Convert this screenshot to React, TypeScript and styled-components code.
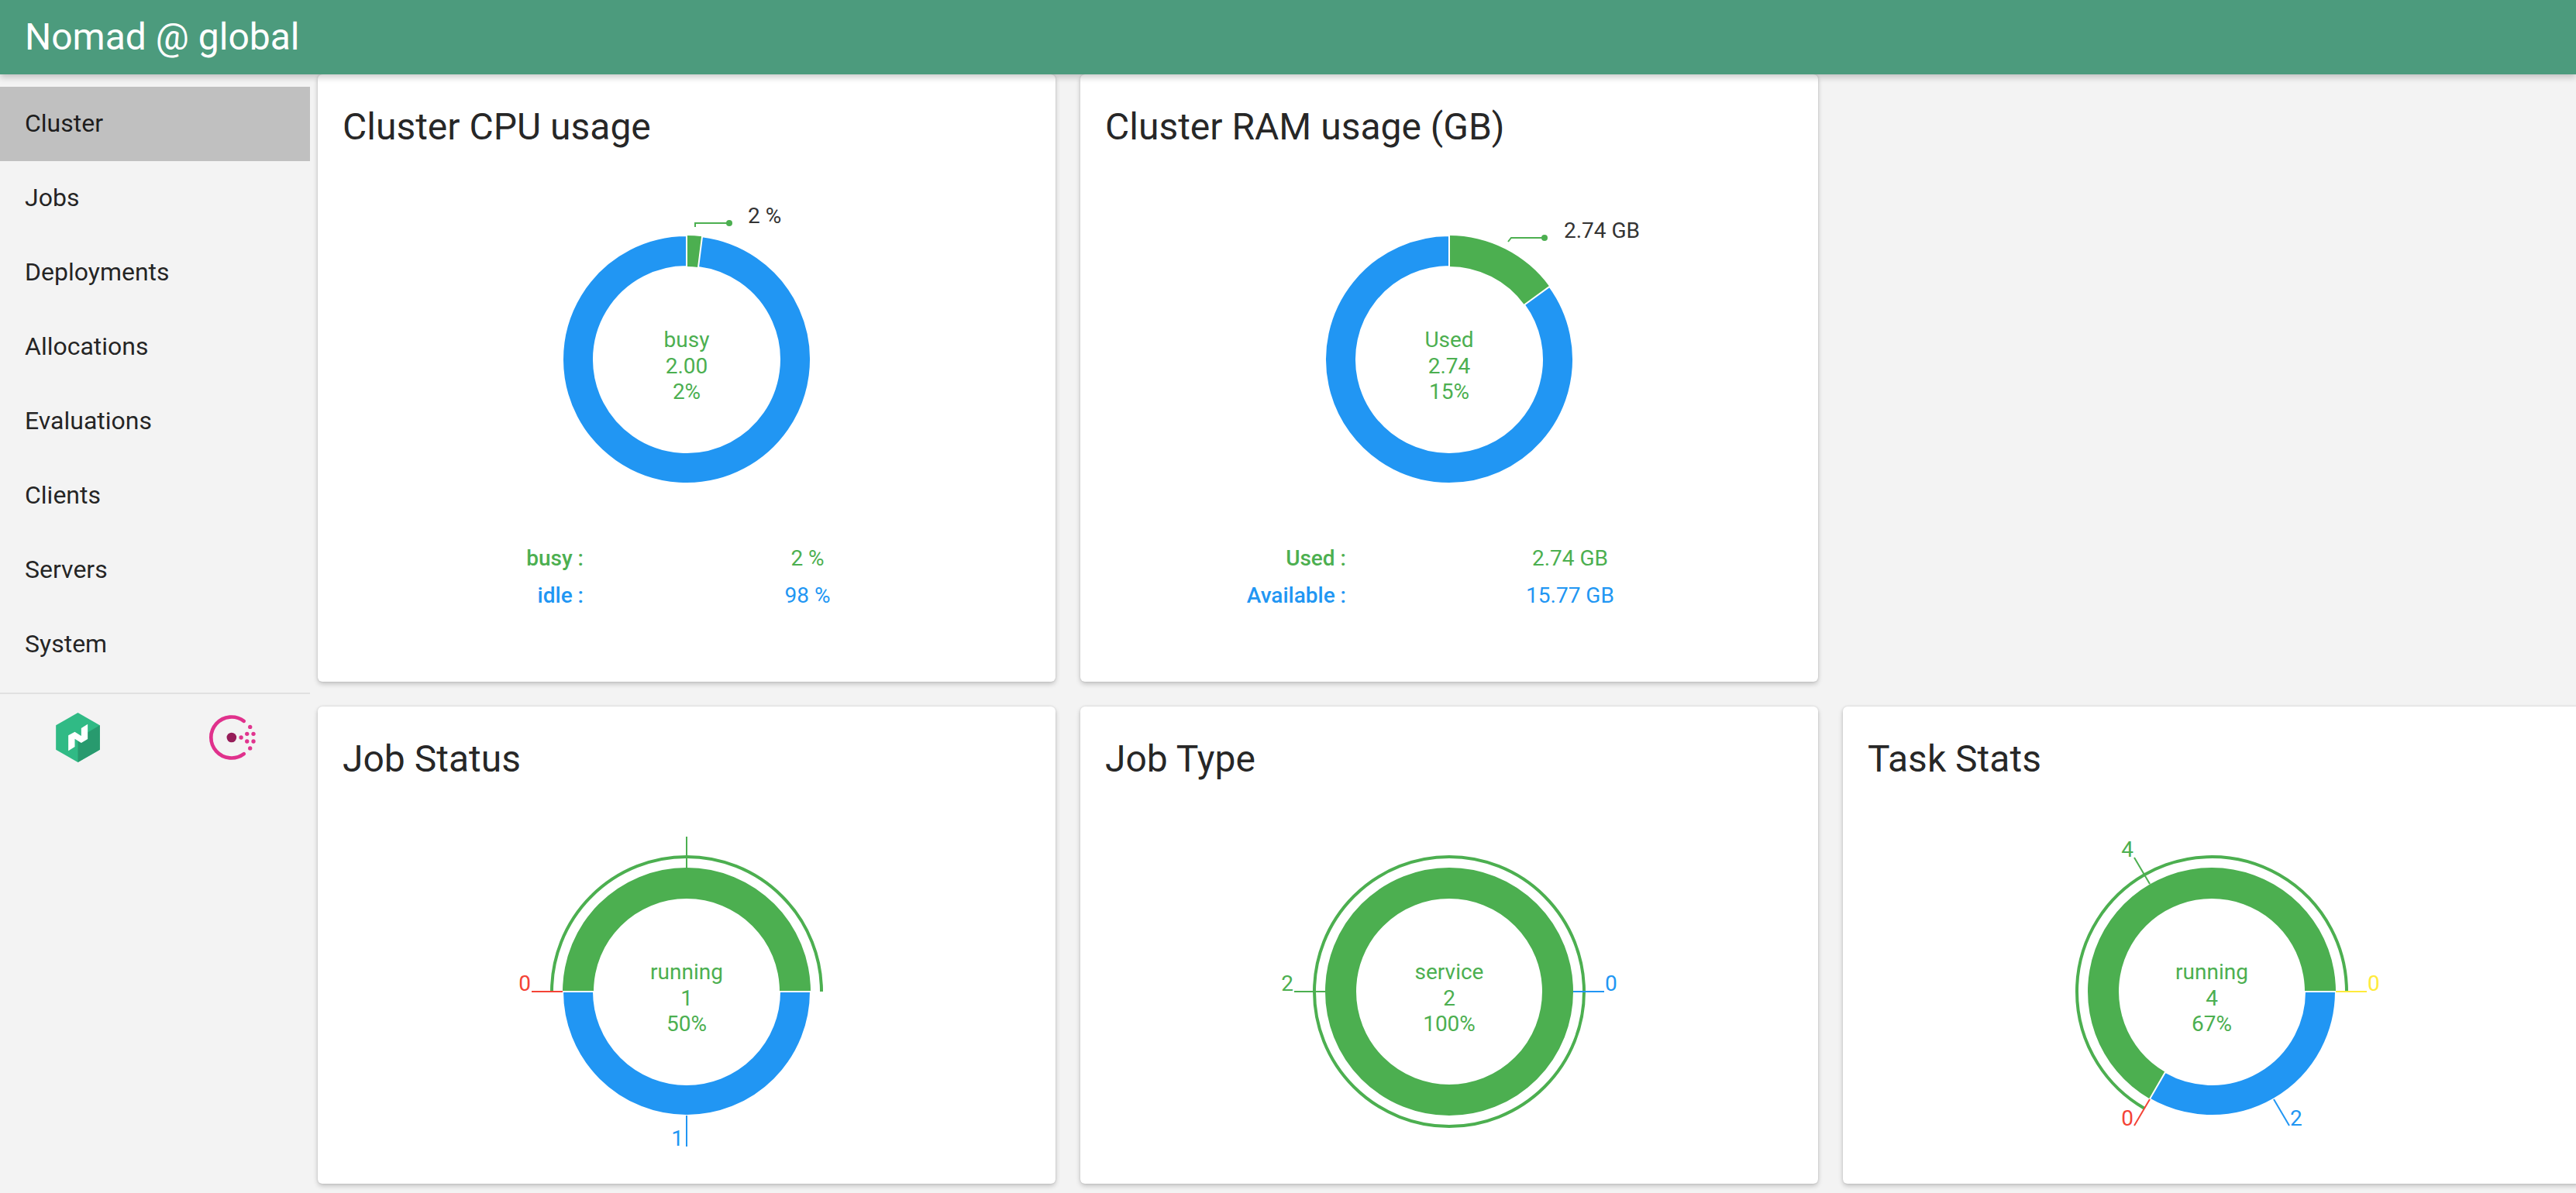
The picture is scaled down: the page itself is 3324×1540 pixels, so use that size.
import React from 'react';
import styled, { createGlobalStyle } from 'styled-components';

const GREEN = '#4caf50';
const BLUE = '#2196f3';
const RED = '#f44336';
const YELLOW = '#ffeb3b';

const INNER = 120;
const OUTER = 160;

type Segment = { from: number; to: number; color: string; outlined?: boolean };
type Leader = { points: string; color: string; dot?: boolean };
type Label = { x: number; y: number; text: string; color: string; anchor?: 'start' | 'end' };

type ChartProps = {
  segments: Segment[];
  center: string[];
  arc?: [number, number];
  leaders: Leader[];
  labels: Label[];
};

const NAV_ITEMS = ['Cluster', 'Jobs', 'Deployments', 'Allocations', 'Evaluations', 'Clients', 'Servers', 'System'];

// angles are in degrees, clockwise from 12 o'clock
function polar(r: number, deg: number) {
  const rad = (deg * Math.PI) / 180;
  return `${(r * Math.sin(rad)).toFixed(2)} ${(-r * Math.cos(rad)).toFixed(2)}`;
}

function arcPath(r: number, from: number, to: number) {
  const large = to - from > 180 ? 1 : 0;
  return `M${polar(r, from)}A${r} ${r} 0 ${large} 1 ${polar(r, to)}`;
}

function slicePath(from: number, to: number) {
  const large = to - from > 180 ? 1 : 0;
  return [
    `M${polar(OUTER, from)}`,
    `A${OUTER} ${OUTER} 0 ${large} 1 ${polar(OUTER, to)}`,
    `L${polar(INNER, to)}`,
    `A${INNER} ${INNER} 0 ${large} 0 ${polar(INNER, from)}`,
    'Z',
  ].join('');
}

function Donut({ segments, center, arc, leaders, labels }: ChartProps) {
  return (
    <ChartSvg viewBox="-476 -240 952 472">
      {segments.map((s, i) =>
        s.to - s.from >= 360 ? (
          <circle key={i} r={(INNER + OUTER) / 2} fill="none" stroke={s.color} strokeWidth={OUTER - INNER} />
        ) : (
          <path
            key={i}
            d={slicePath(s.from, s.to)}
            fill={s.color}
            stroke={s.outlined ? '#fff' : 'none'}
            strokeWidth={2}
          />
        ),
      )}
      {arc &&
        (arc[1] - arc[0] >= 360 ? (
          <circle r={174} fill="none" stroke={GREEN} strokeWidth={4} />
        ) : (
          <path d={arcPath(174, arc[0], arc[1])} fill="none" stroke={GREEN} strokeWidth={4} />
        ))}
      {leaders.map((l, i) => (
        <React.Fragment key={i}>
          <polyline points={l.points} fill="none" stroke={l.color} strokeWidth={2} />
          {l.dot && <circle cx={l.points.split(' ').pop()!.split(',')[0]} cy={l.points.split(' ').pop()!.split(',')[1]} r={4} fill={l.color} />}
        </React.Fragment>
      ))}
      {labels.map((l, i) => (
        <ChartText key={i} x={l.x} y={l.y} fill={l.color} textAnchor={l.anchor ?? 'start'}>
          {l.text}
        </ChartText>
      ))}
      {center.map((line, i) => (
        <ChartText key={i} x={0} y={-16 + i * 33.5} fill={GREEN} textAnchor="middle">
          {line}
        </ChartText>
      ))}
    </ChartSvg>
  );
}

function NomadLogo() {
  return (
    <svg width="57" height="64" viewBox="215 180 170 192">
      <polygon points="300,180 385,229 385,323 300,372 215,323 215,229" fill="#30ba85" />
      <polygon points="385,229 385,323 300,372 300,278" fill="#289a6e" />
      <polygon
        points="263,268 288,254 313,270 313,240 338,224 338,282 313,297 288,281 288,312 263,328"
        fill="#fff"
      />
    </svg>
  );
}

function ConsulLogo() {
  return (
    <svg width="63" height="60" viewBox="806 185 190 180">
      <path d="M944 211A80 80 0 1 0 944 339" fill="none" stroke="#e0318c" strokeWidth="14" strokeLinecap="round" />
      <circle cx="896" cy="275" r="19" fill="#961d59" />
      <g fill="#e0348e">
        <circle cx="933" cy="275" r="8" />
        <circle cx="968" cy="234" r="8" />
        <circle cx="956" cy="261" r="8" />
        <circle cx="981" cy="261" r="8" />
        <circle cx="956" cy="290" r="8" />
        <circle cx="981" cy="290" r="8" />
        <circle cx="968" cy="317" r="8" />
      </g>
    </svg>
  );
}

export default function App() {
  return (
    <>
      <GlobalStyle />
      <Page>
        <Header>Nomad @ global</Header>
        <Body>
          <Sidebar>
            <NavList>
              {NAV_ITEMS.map((item, i) => (
                <NavItem key={item} $active={i === 0}>
                  {item}
                </NavItem>
              ))}
            </NavList>
            <LogoRow>
              <NomadLogo />
              <ConsulLogo />
            </LogoRow>
          </Sidebar>
          <Main>
            <Card $row={1}>
              <CardTitle>Cluster CPU usage</CardTitle>
              <Donut
                segments={[
                  { from: 0, to: 7.2, color: GREEN },
                  { from: 7.2, to: 360, color: BLUE, outlined: true },
                ]}
                center={['busy', '2.00', '2%']}
                leaders={[{ points: '11,-171 11,-176 55,-176', color: GREEN, dot: true }]}
                labels={[{ x: 79, y: -176, text: '2 %', color: '#333' }]}
              />
              <Legend>
                <LegendLabel $color={GREEN}>busy :</LegendLabel>
                <LegendValue $color={GREEN}>2 %</LegendValue>
                <LegendLabel $color={BLUE}>idle :</LegendLabel>
                <LegendValue $color={BLUE}>98 %</LegendValue>
              </Legend>
            </Card>
            <Card $row={1}>
              <CardTitle>Cluster RAM usage (GB)</CardTitle>
              <Donut
                segments={[
                  { from: 0, to: 54, color: GREEN },
                  { from: 54, to: 360, color: BLUE, outlined: true },
                ]}
                center={['Used', '2.74', '15%']}
                leaders={[{ points: '76,-152 80,-157 123,-157', color: GREEN, dot: true }]}
                labels={[{ x: 148, y: -157, text: '2.74 GB', color: '#333' }]}
              />
              <Legend>
                <LegendLabel $color={GREEN}>Used :</LegendLabel>
                <LegendValue $color={GREEN}>2.74 GB</LegendValue>
                <LegendLabel $color={BLUE}>Available :</LegendLabel>
                <LegendValue $color={BLUE}>15.77 GB</LegendValue>
              </Legend>
            </Card>
            <Spacer />
            <Card $row={2}>
              <CardTitle>Job Status</CardTitle>
              <Donut
                segments={[
                  { from: 270, to: 450, color: GREEN },
                  { from: 90, to: 270, color: BLUE, outlined: true },
                ]}
                arc={[270, 450]}
                center={['running', '1', '50%']}
                leaders={[
                  { points: '0,-200 0,-160', color: GREEN },
                  { points: '-200,0 -160,0', color: RED },
                  { points: '0,160 0,200', color: BLUE },
                ]}
                labels={[
                  { x: -201, y: -1, text: '0', color: RED, anchor: 'end' },
                  { x: -4, y: 199, text: '1', color: BLUE, anchor: 'end' },
                ]}
              />
            </Card>
            <Card $row={2}>
              <CardTitle>Job Type</CardTitle>
              <Donut
                segments={[{ from: 0, to: 360, color: GREEN }]}
                arc={[0, 360]}
                center={['service', '2', '100%']}
                leaders={[
                  { points: '-200,0 -160,0', color: GREEN },
                  { points: '160,0 200,0', color: BLUE },
                ]}
                labels={[
                  { x: -201, y: -1, text: '2', color: GREEN, anchor: 'end' },
                  { x: 201, y: -1, text: '0', color: BLUE },
                ]}
              />
            </Card>
            <Card $row={2}>
              <CardTitle>Task Stats</CardTitle>
              <Donut
                segments={[
                  { from: 210, to: 450, color: GREEN },
                  { from: 90, to: 210, color: BLUE, outlined: true },
                ]}
                arc={[210, 450]}
                center={['running', '4', '67%']}
                leaders={[
                  { points: '-80,-139 -100,-173', color: GREEN },
                  { points: '-80,139 -100,173', color: RED },
                  { points: '80,139 100,173', color: BLUE },
                  { points: '160,0 200,0', color: YELLOW },
                ]}
                labels={[
                  { x: -101, y: -174, text: '4', color: GREEN, anchor: 'end' },
                  { x: -101, y: 173, text: '0', color: RED, anchor: 'end' },
                  { x: 101, y: 173, text: '2', color: BLUE },
                  { x: 201, y: -1, text: '0', color: YELLOW },
                ]}
              />
            </Card>
          </Main>
        </Body>
      </Page>
    </>
  );
}

const GlobalStyle = createGlobalStyle`
  html, body {
    margin: 0;
    padding: 0;
    background: #f3f3f3;
    overflow: hidden;
  }
  * {
    box-sizing: border-box;
  }
`;

const Page = styled.div`
  width: 3324px;
  height: 1540px;
  overflow: hidden;
  font-family: Roboto, 'Liberation Sans', sans-serif;
  color: rgba(0, 0, 0, 0.87);
  background: #f3f3f3;
`;

const Header = styled.header`
  position: relative;
  z-index: 2;
  height: 96px;
  padding: 0 32px 2px;
  display: flex;
  align-items: center;
  background: #4c9b7d;
  color: #fff;
  font-size: 48px;
  box-shadow: 0 4px 8px rgba(0, 0, 0, 0.2);
`;

const Body = styled.div`
  display: flex;
`;

const Sidebar = styled.nav`
  flex: 0 0 400px;
  padding-top: 16px;
`;

const NavList = styled.div`
  padding-bottom: 14px;
  border-bottom: 2px solid #e0e0e0;
`;

const NavItem = styled.div<{ $active?: boolean }>`
  height: 96px;
  padding: 0 32px 2px;
  display: flex;
  align-items: center;
  font-size: 32px;
  background: ${p => (p.$active ? '#c0c0c0' : 'transparent')};
`;

const LogoRow = styled.div`
  display: grid;
  grid-template-columns: 200px 200px;
  justify-items: center;
  align-items: center;
  padding-top: 24px;
`;

const Main = styled.main`
  flex: none;
  margin-left: 10px;
  display: grid;
  grid-template-columns: repeat(3, 952px);
  column-gap: 32px;
  row-gap: 32px;
  align-content: start;
`;

const Spacer = styled.div``;

const Card = styled.section<{ $row: 1 | 2 }>`
  height: ${p => (p.$row === 1 ? 784 : 616)}px;
  background: #fff;
  border-radius: 6px;
  box-shadow: 0 3px 6px rgba(0, 0, 0, 0.2), 0 0 3px rgba(0, 0, 0, 0.12);
`;

const CardTitle = styled.h2`
  height: 128px;
  margin: 0;
  padding: 36px 32px 0;
  font-size: 48px;
  font-weight: 400;
  line-height: 64px;
`;

const ChartSvg = styled.svg`
  display: block;
  width: 952px;
  height: 472px;
  overflow: visible;
`;

const ChartText = styled.text`
  font-family: Roboto, 'Liberation Sans', sans-serif;
  font-size: 28px;
`;

const Legend = styled.div`
  display: grid;
  grid-template-columns: 343px 578px;
  grid-auto-rows: 48px;
  align-items: center;
  font-size: 28px;
`;

const LegendLabel = styled.div<{ $color: string }>`
  color: ${p => p.$color};
  font-weight: 500;
  text-align: right;
`;

const LegendValue = styled.div<{ $color: string }>`
  color: ${p => p.$color};
  text-align: center;
`;
